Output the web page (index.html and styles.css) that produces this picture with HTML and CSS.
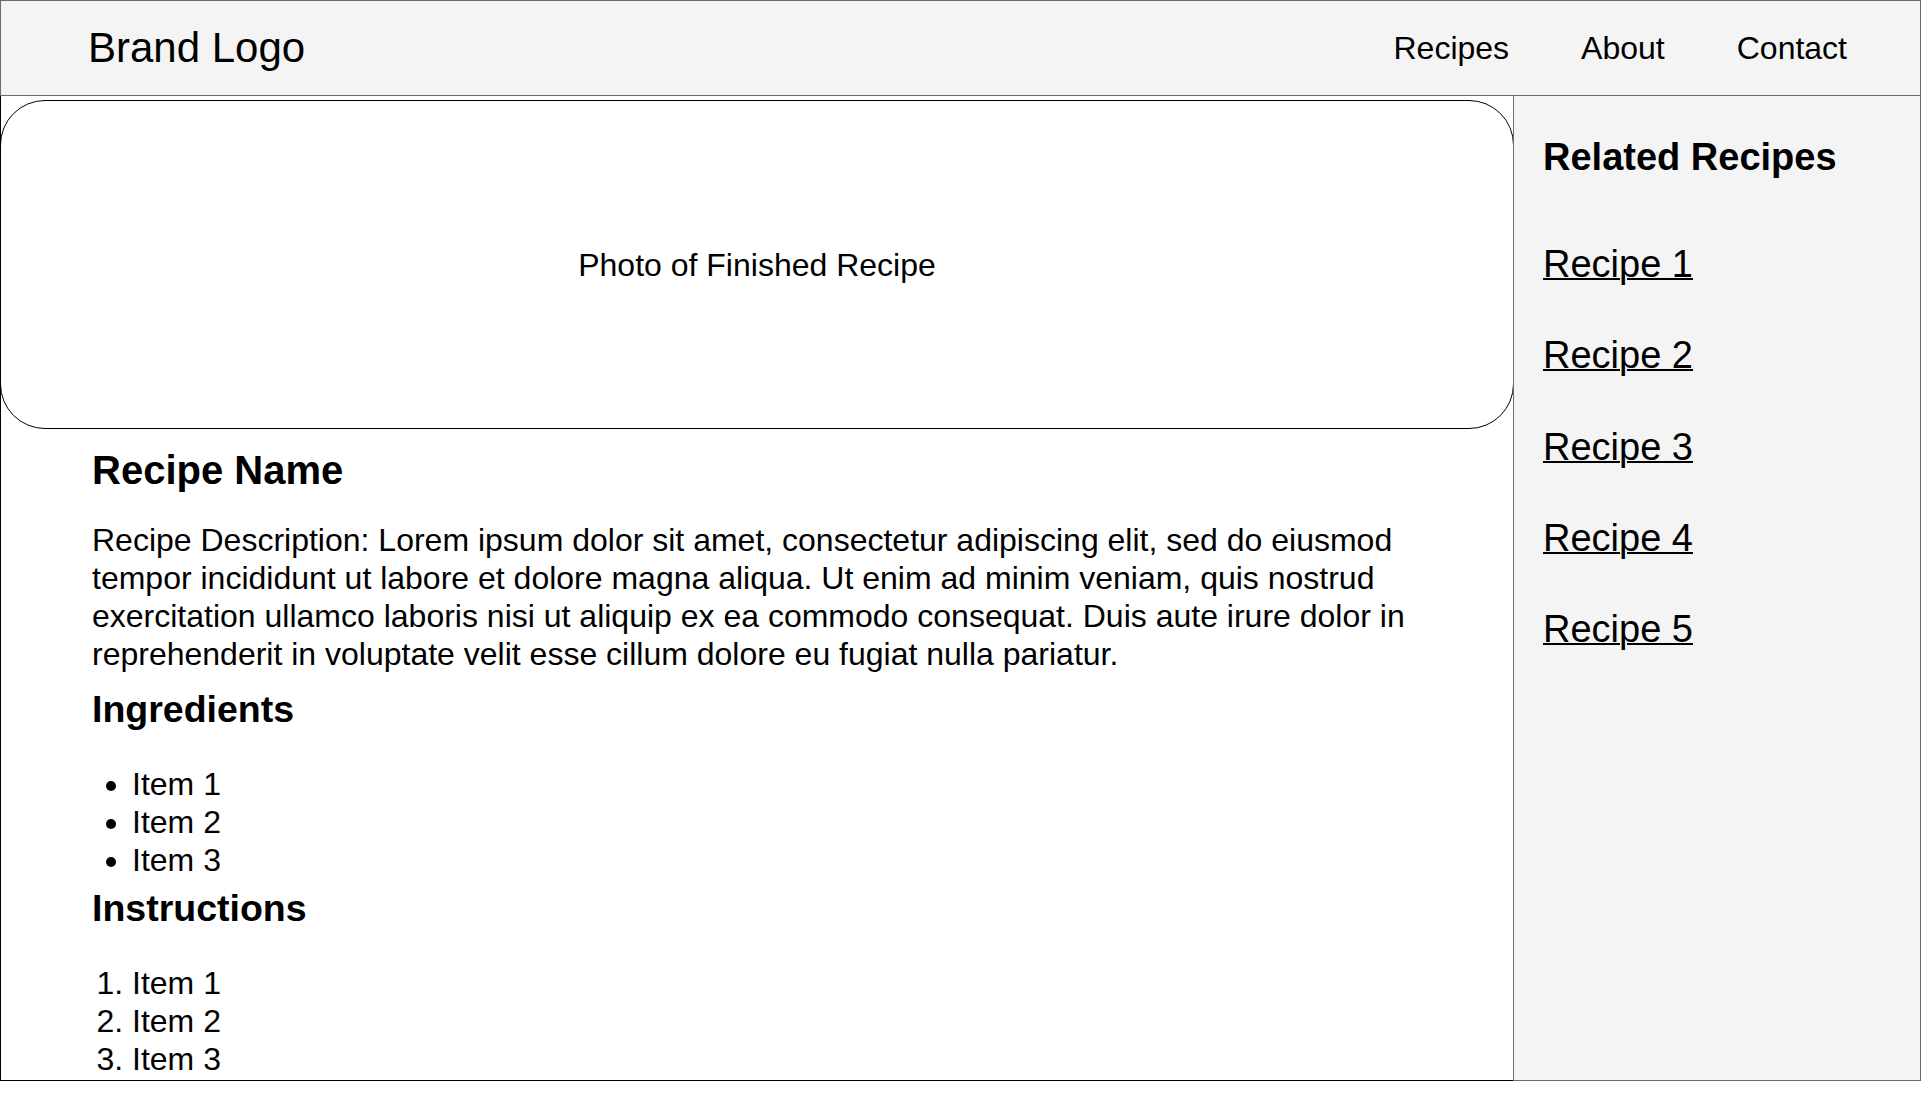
FILE: index.html
```html
<!DOCTYPE html>
<html>
<head>
	<meta charset="utf-8">
	<title>Recipe</title>
	<link rel="stylesheet" href="styles.css">
</head>
<body>
<div class="page">
	<header class="topbar">
		<div class="brand">Brand Logo</div>
		<nav class="nav">
			<a href="#">Recipes</a>
			<a href="#">About</a>
			<a href="#">Contact</a>
		</nav>
	</header>
	<div class="layout">
		<main class="main">
			<div class="photo">Photo of Finished Recipe</div>
			<div class="content">
				<h1 class="title">Recipe Name</h1>
				<p class="desc">Recipe Description: Lorem ipsum dolor sit amet, consectetur adipiscing elit, sed do eiusmod tempor incididunt ut labore et dolore magna aliqua. Ut enim ad minim veniam, quis nostrud exercitation ullamco laboris nisi ut aliquip ex ea commodo consequat. Duis aute irure dolor in reprehenderit in voluptate velit esse cillum dolore eu fugiat nulla pariatur.</p>
				<h2 class="sub">Ingredients</h2>
				<ul class="items">
					<li>Item 1</li>
					<li>Item 2</li>
					<li>Item 3</li>
				</ul>
				<h2 class="sub sub2">Instructions</h2>
				<ol class="items">
					<li>Item 1</li>
					<li>Item 2</li>
					<li>Item 3</li>
				</ol>
			</div>
		</main>
		<aside class="side">
			<h2 class="side-title">Related Recipes</h2>
			<ul class="related">
				<li><a href="#">Recipe 1</a></li>
				<li><a href="#">Recipe 2</a></li>
				<li><a href="#">Recipe 3</a></li>
				<li><a href="#">Recipe 4</a></li>
				<li><a href="#">Recipe 5</a></li>
			</ul>
		</aside>
	</div>
</div>
</body>
</html>
```

FILE: styles.css
```css
*{box-sizing:border-box;}
body{margin:0;background:#fff;color:#000;font:32px/38px "Liberation Sans",Arial,sans-serif;}
.page{width:1921px;height:1081px;display:flex;flex-direction:column;}

.topbar{flex:none;height:96px;display:flex;align-items:center;justify-content:space-between;background:#f4f4f4;border:1px solid #6b6b6b;padding:0 37px 0 87px;}
.brand{font-size:42px;line-height:48px;}
.nav{display:flex;}
.nav a{color:#000;text-decoration:none;padding:0 36px;}

.layout{flex:1;display:flex;min-height:0;}
.main{flex:none;width:1513px;border-left:1px solid #000;border-bottom:1px solid #000;padding-top:4px;}
.photo{height:329px;margin:0 -1px 0 -1px;border:1px solid #000;border-radius:45px;display:flex;align-items:center;justify-content:center;}
.content{padding:0 80px 0 91px;}
.title{font-size:40px;line-height:46px;font-weight:700;margin:18px 0 0;}
.desc{margin:28px 0 0;}
.sub{font-size:37.5px;line-height:44px;font-weight:700;margin:14px 0 34px;}
.sub2{margin-top:7px;}
.items{margin:0;padding-left:40px;line-height:38px;}

.side{flex:1;position:relative;background:#f4f4f4;border:1px solid #6b6b6b;border-top:0;padding:39px 20px 0 29px;}
.side-title{font-size:38px;line-height:44px;font-weight:700;margin:0;}
.related{list-style:none;margin:63px 0 0;padding:0;display:flex;flex-direction:column;gap:47.3px;font-size:38px;line-height:44px;}
.related a{color:#000;text-decoration-thickness:2px;}
```
